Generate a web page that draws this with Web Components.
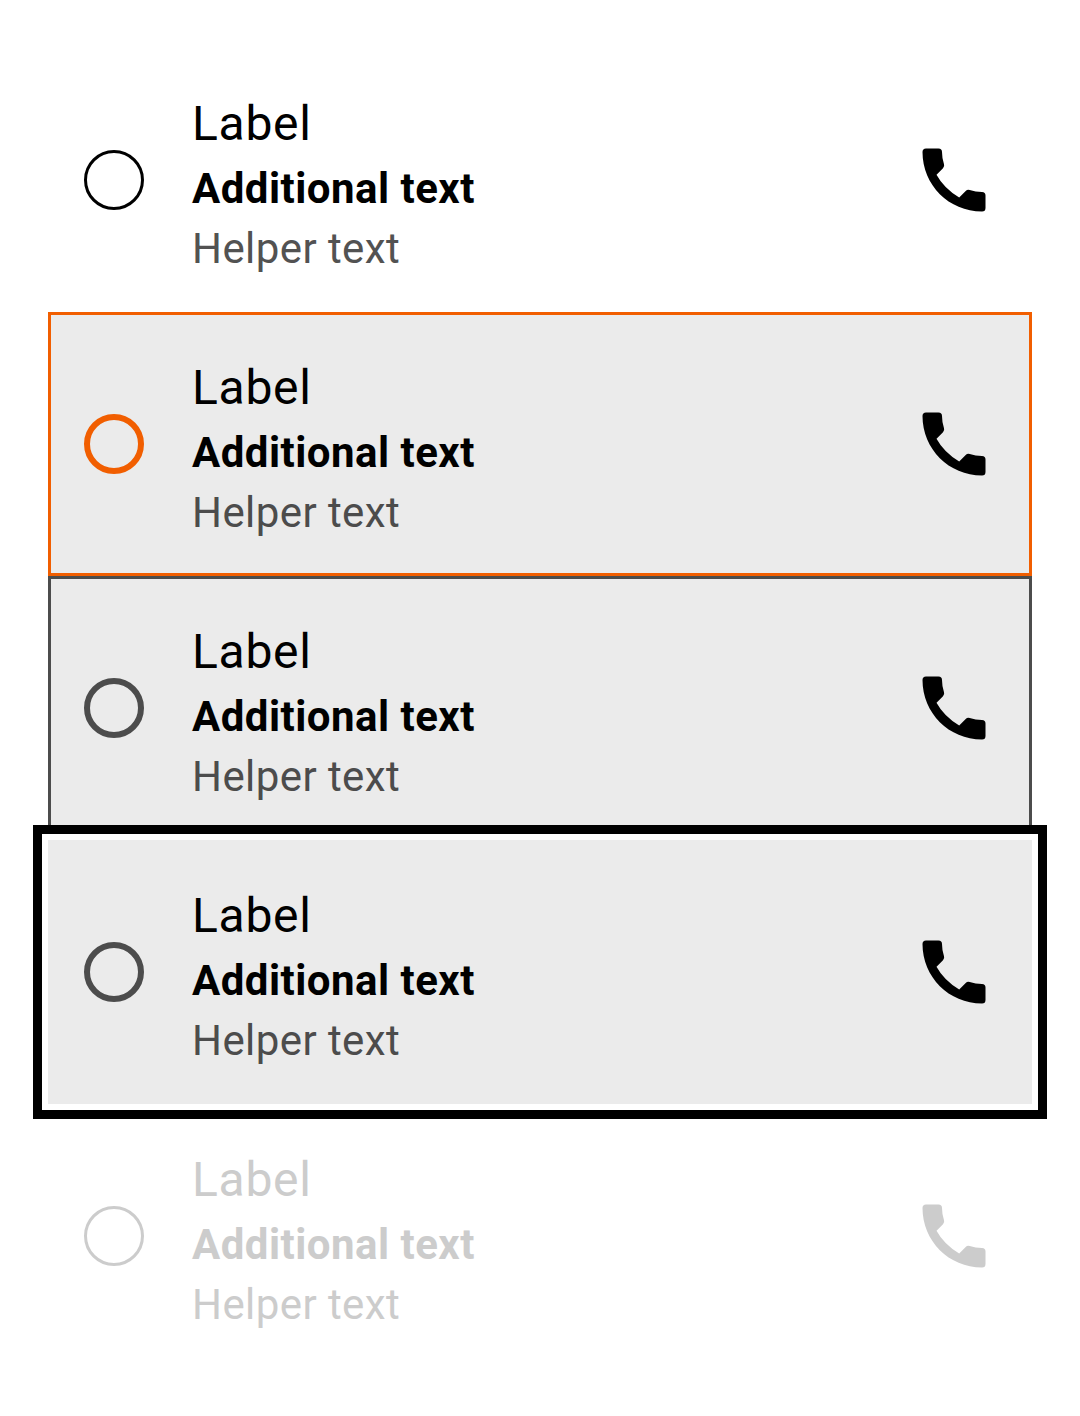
<!DOCTYPE html>
<html lang="en"><head><meta charset="utf-8"><title>Radio button items</title>
<style>body{margin:0;background:#fff;font-family:Roboto,sans-serif}</style></head>
<body>
<radio-list>
<radio-item></radio-item>
<radio-item state="pressed"></radio-item>
<radio-item state="hovered"></radio-item>
<radio-item state="focused"></radio-item>
<radio-item state="disabled"></radio-item>
</radio-list>
<script>
customElements.define('phone-icon', class extends HTMLElement {
  constructor(){super();this.attachShadow({mode:'open'}).innerHTML=`
<style>:host{display:block;width:84px;height:84px}svg{display:block;width:100%;height:100%}</style>
<svg viewBox="0 0 84 84" fill="currentColor"><path d="M14 10.5H26.5Q30 10.5 30 14Q30 20.500 32 26.300Q32.800 28.500 31 30.300L24.500 36.800Q32 50.500 47.200 59.500L53.700 53Q55.500 51.200 57.700 52Q63.500 54 70 54Q73.500 54 73.500 57.500V70Q73.500 73.500 70 73.500C37 73.500 10.500 47 10.500 14Q10.500 10.500 14 10.500Z"/></svg>`}
});
customElements.define('radio-list', class extends HTMLElement {
  constructor(){super();this.attachShadow({mode:'open'}).innerHTML=`
<style>:host{display:flex;flex-direction:column;box-sizing:border-box;height:1416px;padding:48px}</style><slot></slot>`}
});
customElements.define('radio-item', class extends HTMLElement {
  constructor(){super();this.attachShadow({mode:'open'}).innerHTML=`
<style>
:host{display:flex;box-sizing:border-box;height:264px;flex:none;align-items:center;padding:0 36px;color:#000;--helper:#525252;--ring:#000;--ring-width:3px}
:host([state=pressed]),:host([state=hovered]),:host([state=focused]){background:#ebebeb;--helper:#4c4c4c;--ring:#4c4c4c;--ring-width:6px}
:host([state=pressed]){--ring:#f15e00;box-shadow:inset 0 0 0 3px #f15e00}
:host([state=hovered]){box-shadow:inset 0 0 0 3px #4c4c4c}
:host([state=focused]){z-index:1;position:relative;box-shadow:0 0 0 6px #fff,0 0 0 15px #000}
:host([state=disabled]){color:#ccc;--helper:#ccc;--ring:#ccc}
.ring{box-sizing:border-box;width:60px;height:60px;border:var(--ring-width) solid var(--ring);border-radius:50%;flex:none}
.text{flex:1;margin-left:48px;padding-top:8px}
.label{font-size:48px;line-height:70px;letter-spacing:.72px}
.add{font-size:42px;line-height:60px;font-weight:700;letter-spacing:.48px}
.help{font-size:42px;line-height:60px;letter-spacing:.42px;color:var(--helper)}
</style>
<div class="ring"></div>
<div class="text"><div class="label">Label</div><div class="add">Additional text</div><div class="help">Helper text</div></div>
<phone-icon></phone-icon>`}
});
</script></body></html>
